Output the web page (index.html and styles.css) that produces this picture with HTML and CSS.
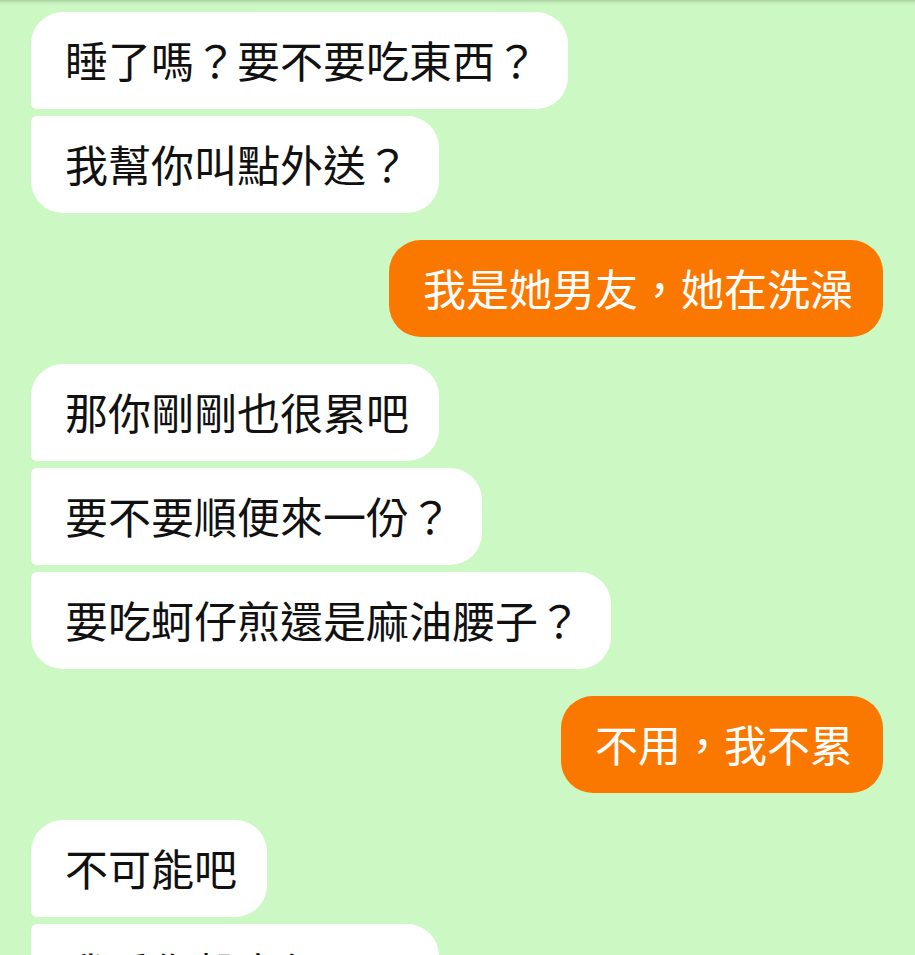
FILE: index.html
```html
<!DOCTYPE html>
<html lang="zh-Hant">
<head>
<meta charset="utf-8">
<link rel="stylesheet" href="styles.css">
</head>
<body>
<div class="chat">
  <div class="group in">
    <div class="bubble first">睡了嗎？要不要吃東西？</div>
    <div class="bubble last">我幫你叫點外送？</div>
  </div>
  <div class="group out">
    <div class="bubble">我是她男友，她在洗澡</div>
  </div>
  <div class="group in">
    <div class="bubble first">那你剛剛也很累吧</div>
    <div class="bubble mid">要不要順便來一份？</div>
    <div class="bubble last">要吃蚵仔煎還是麻油腰子？</div>
  </div>
  <div class="group out">
    <div class="bubble">不用，我不累</div>
  </div>
  <div class="group in">
    <div class="bubble first">不可能吧</div>
    <div class="bubble last">我看你聲音很累耶</div>
  </div>
</div>
</body>
</html>
```
FILE: styles.css
```css
html, body {
  margin: 0;
  padding: 0;
}
body {
  width: 915px;
  height: 955px;
  overflow: hidden;
  background: linear-gradient(#a9cfa1 0, #c4efbb 3px, #ccf8c3 6px, #ccf8c3 100%);
  font-family: "Noto Sans CJK TC", "Noto Sans CJK SC", sans-serif;
}
.chat {
  display: flex;
  flex-direction: column;
  gap: 27px;
  padding: 12px 32px 0 31px;
}
.group {
  display: flex;
  flex-direction: column;
  gap: 7px;
}
.group.in { align-items: flex-start; }
.group.out { align-items: flex-end; }
.bubble {
  font-size: 43px;
  line-height: 57px;
  height: 57px;
  padding: 19px 30px 21px 34px;
  border-radius: 32px;
  white-space: nowrap;
}
.in .bubble {
  background: #ffffff;
  color: #111111;
}
.out .bubble {
  background: #fb7800;
  color: #ffffff;
}
.in .bubble.first { border-bottom-left-radius: 6px; }
.in .bubble.mid { border-top-left-radius: 6px; border-bottom-left-radius: 6px; }
.in .bubble.last { border-top-left-radius: 6px; }
```
